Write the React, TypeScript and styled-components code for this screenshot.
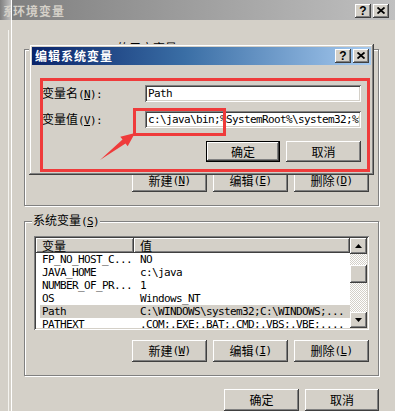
import React from 'react';
import styled, { createGlobalStyle, css } from 'styled-components';

const face = '#d4d0c8';
const shade = '#808080';
const dark = '#404040';
const mark = '#ef3b3b';

const GlobalStyle = createGlobalStyle`
  html, body {
    margin: 0;
    padding: 0;
    background: ${face};
  }

  body {
    font-family: "Noto Sans CJK SC", sans-serif;
    font-size: 12px;
    color: #000;
  }

  * {
    box-sizing: border-box;
  }
`;

const raised = css`
  background: ${face};
  box-shadow:
    inset -1px -1px ${dark},
    inset 1px 1px #fff,
    inset -2px -2px ${shade},
    inset 2px 2px ${face};
`;

const sunken = css`
  box-shadow:
    inset 1px 1px ${shade},
    inset -1px -1px #fff,
    inset 2px 2px ${dark},
    inset -2px -2px ${face};
`;

const mono = css`
  font-family: "DejaVu Sans Mono", "Liberation Mono", monospace;
  font-size: 11px;
  letter-spacing: -0.62px;
`;

const Screen = styled.div`
  position: relative;
  display: flex;
  width: 395px;
  height: 411px;
  overflow: hidden;
  background: ${face};
`;

const TitleBar = styled.div<{ $active?: boolean; $h?: number }>`
  flex: none;
  display: flex;
  align-items: center;
  gap: 2px;
  height: ${p => p.$h ?? 20}px;
  padding: ${p => (p.$active ? '0 2px 0 3px' : '2px 6px 0 1px')};
  overflow: hidden;
  background: ${p => (p.$active
    ? 'linear-gradient(to right, #0a246a, #3a6ea5 45%, #a6caf0)'
    : 'linear-gradient(to right, #808080, #c0c0c0)')};
`;

const StripTitle = styled(TitleBar)`
  padding: 2px 0 0 3px;
`;

const TitleText = styled.span<{ $active?: boolean }>`
  flex: 1;
  overflow: hidden;
  white-space: nowrap;
  font-weight: 700;
  letter-spacing: 1px;
  line-height: 14px;
  color: ${p => (p.$active ? '#fff' : face)};
`;

const CaptionButton = styled.div`
  ${raised};
  display: flex;
  flex: none;
  align-items: center;
  justify-content: center;
  width: 16px;
  height: 14px;
  padding-bottom: 1px;
  font-family: "Liberation Sans", sans-serif;
  font-size: 12px;
  font-weight: 700;
  line-height: 12px;
`;

const BackStrip = styled.div`
  display: flex;
  flex-direction: column;
  width: 11px;
  flex: none;
`;

const BackEdge = styled.div`
  flex: 1;
  margin: 10px 0 0 8px;
  border-left: 1px solid #f4f3ef;
`;

const EnvWindow = styled.div`
  display: flex;
  flex-direction: column;
  flex: 1;
  min-width: 0;
  border-left: 1px solid #fff;
`;

const EnvBody = styled.div`
  display: flex;
  flex-direction: column;
  padding: 22px 16px 0 12px;
`;

const Group = styled.fieldset<{ $gap?: number }>`
  margin: ${p => p.$gap ?? 0}px 0 0;
  padding: 0 9px 13px;
  border: 1px solid ${shade};
  box-shadow: inset 1px 1px #fff, 1px 1px #fff;
  min-width: 0;
`;

const Legend = styled.legend`
  margin-left: -2px;
  padding: 0 1px;
  background: ${face};
  line-height: 12px;
  white-space: nowrap;
`;

const Latin = styled.span`
  ${mono};
`;

const ListView = styled.div<{ $h: number; $gap: number }>`
  ${sunken};
  display: flex;
  height: ${p => p.$h}px;
  margin-top: ${p => p.$gap}px;
  padding: 2px;
  background: #fff;
  overflow: hidden;
`;

const ListMain = styled.div`
  flex: 1;
  min-width: 0;
  overflow: hidden;
`;

const HeaderRow = styled.div`
  display: flex;
  height: 15px;
`;

const HeaderCell = styled.div<{ $w?: number }>`
  ${raised};
  flex: ${p => (p.$w ? `0 0 ${p.$w}px` : '1')};
  padding-left: 6px;
  line-height: 15px;
`;

const Row = styled.div<{ $selected?: boolean }>`
  display: flex;
  height: 13px;
  margin-left: 4px;
  background: ${p => (p.$selected ? face : 'transparent')};
  ${mono};
  line-height: 13px;
  white-space: nowrap;
`;

const Cell = styled.div<{ $w?: number }>`
  flex: ${p => (p.$w ? `0 0 ${p.$w}px` : '1')};
  padding-left: ${p => (p.$w ? 2 : 6)}px;
  overflow: hidden;
`;

const ScrollBar = styled.div`
  display: flex;
  flex-direction: column;
  width: 17px;
  flex: none;
`;

const ScrollButton = styled.div`
  ${raised};
  display: flex;
  align-items: center;
  justify-content: center;
  height: 16px;
  flex: none;
`;

const Track = styled.div`
  flex: 1;
  background: repeating-conic-gradient(#fff 0 25%, ${face} 0 50%) 0 0 / 2px 2px;
`;

const Thumb = styled.div<{ $top: number }>`
  ${raised};
  height: 18px;
  margin-top: ${p => p.$top}px;
`;

const ButtonRow = styled.div<{ $gap: number }>`
  display: flex;
  justify-content: flex-end;
  gap: 6px;
  margin-top: ${p => p.$gap}px;
`;

const Button = styled.button<{ $default?: boolean; $w?: number; $h?: number }>`
  ${raised};
  display: flex;
  align-items: center;
  justify-content: center;
  width: ${p => p.$w ?? 75}px;
  height: ${p => p.$h ?? 22}px;
  padding: 0;
  border: ${p => (p.$default ? '1px solid #000' : 'none')};
  font: inherit;
  line-height: 12px;
  color: #000;
`;

const Dialog = styled.div`
  position: absolute;
  left: 29px;
  top: 44px;
  display: flex;
  flex-direction: column;
  width: 345px;
  height: 131px;
  padding: 3px;
  background: ${face};
  box-shadow:
    inset -1px -1px ${dark},
    inset 1px 1px ${face},
    inset -2px -2px ${shade},
    inset 2px 2px #fff;
`;

const DialogBody = styled.div`
  padding: 20px 10px 0;
`;

const Form = styled.div`
  display: grid;
  grid-template-columns: 103px 216px;
  row-gap: 9px;
  align-items: center;
`;

const Label = styled.span`
  line-height: 12px;
  white-space: nowrap;
`;

const TextBox = styled.input`
  ${sunken};
  ${mono};
  width: 216px;
  height: 17px;
  padding: 0 2px 0 3px;
  border: none;
  outline: none;
  background: #fff;
  color: #000;
`;

const Marker = styled.div<{ $x: number; $y: number; $w: number; $h: number }>`
  position: absolute;
  left: ${p => p.$x}px;
  top: ${p => p.$y}px;
  width: ${p => p.$w}px;
  height: ${p => p.$h}px;
  border: 3px solid ${mark};
  pointer-events: none;
`;

const Overlay = styled.svg`
  position: absolute;
  left: 0;
  top: 0;
  pointer-events: none;
`;

const rows = [
  ['FP_NO_HOST_C...', 'NO'],
  ['JAVA_HOME', 'c:\\java'],
  ['NUMBER_OF_PR...', '1'],
  ['OS', 'Windows_NT'],
  ['Path', 'C:\\WINDOWS\\system32;C:\\WINDOWS;...'],
  ['PATHEXT', '.COM;.EXE;.BAT;.CMD;.VBS;.VBE;....'],
];

const userRows = [
  ['TEMP', '%USERPROFILE%\\Local Settings\\Temp'],
  ['TMP', '%USERPROFILE%\\Local Settings\\Temp'],
];

function Key ({ k }: { k: string }) {
  return <Latin>(<u>{k}</u>)</Latin>;
}

function Arrow ({ up }: { up?: boolean }) {
  return (
    <svg width="7" height="4" viewBox="0 0 7 4">
      <polygon points={up ? '3.5,0 7,4 0,4' : '0,0 7,0 3.5,4'} fill="#000" />
    </svg>
  );
}

function CloseGlyph () {
  return (
    <svg width="8" height="7" viewBox="0 0 8 7">
      <path d="M0.5 0.5 L7.5 6.5 M7.5 0.5 L0.5 6.5" stroke="#000" strokeWidth="1.8" />
    </svg>
  );
}

function VarList ({ data, h, gap, selected }: { data: string[][]; h: number; gap: number; selected?: number }) {
  return (
    <ListView $h={h} $gap={gap}>
      <ListMain>
        <HeaderRow>
          <HeaderCell $w={98}>变量</HeaderCell>
          <HeaderCell>值</HeaderCell>
        </HeaderRow>
        {data.map(([name, value], i) => (
          <Row key={name} $selected={i === selected}>
            <Cell $w={94}>{name}</Cell>
            <Cell>{value}</Cell>
          </Row>
        ))}
      </ListMain>
      <ScrollBar>
        <ScrollButton><Arrow up /></ScrollButton>
        <Track><Thumb $top={11} /></Track>
        <ScrollButton><Arrow /></ScrollButton>
      </ScrollBar>
    </ListView>
  );
}

export default function App () {
  return (
    <Screen>
      <GlobalStyle />

      <BackStrip>
        <StripTitle>
          <TitleText>系</TitleText>
        </StripTitle>
        <BackEdge />
      </BackStrip>

      <EnvWindow>
        <TitleBar>
          <TitleText>环境变量</TitleText>
          <CaptionButton>?</CaptionButton>
          <CaptionButton><CloseGlyph /></CaptionButton>
        </TitleBar>

        <EnvBody>
          <Group>
            <Legend><Latin>Administrator </Latin>的用户变量<Key k="U" /></Legend>
            <VarList data={userRows} h={96} gap={8} />
            <ButtonRow $gap={10}>
              <Button>新建<Key k="N" /></Button>
              <Button>编辑<Key k="E" /></Button>
              <Button>删除<Key k="D" /></Button>
            </ButtonRow>
          </Group>

          <Group $gap={8}>
            <Legend>系统变量<Key k="S" /></Legend>
            <VarList data={rows} h={94} gap={8} selected={4} />
            <ButtonRow $gap={10}>
              <Button>新建<Key k="W" /></Button>
              <Button>编辑<Key k="I" /></Button>
              <Button>删除<Key k="L" /></Button>
            </ButtonRow>
          </Group>

          <ButtonRow $gap={13}>
            <Button>确定</Button>
            <Button $w={74}>取消</Button>
          </ButtonRow>
        </EnvBody>
      </EnvWindow>

      <Dialog>
        <TitleBar $active $h={18}>
          <TitleText $active>编辑系统变量</TitleText>
          <CaptionButton>?</CaptionButton>
          <CaptionButton><CloseGlyph /></CaptionButton>
        </TitleBar>
        <DialogBody>
          <Form>
            <Label>变量名<Latin>(<u>N</u>):</Latin></Label>
            <TextBox readOnly value="Path" />
            <Label>变量值<Latin>(<u>V</u>):</Latin></Label>
            <TextBox readOnly value="c:\java\bin;%SystemRoot%\system32;%SystemRoot%" />
          </Form>
          <ButtonRow $gap={13}>
            <Button $default $w={74} $h={21}>确定</Button>
            <Button $h={21}>取消</Button>
          </ButtonRow>
        </DialogBody>
      </Dialog>

      <Marker $x={40} $y={78} $w={330} $h={94} />
      <Marker $x={133} $y={108} $w={93} $h={28} />
      <Overlay width="395" height="411" viewBox="0 0 395 411">
        <polygon
          points="100,160 122.5,139.5 120.3,136.8 135,133 127.7,146.2 125.5,143.5"
          fill={mark}
        />
      </Overlay>
    </Screen>
  );
}
